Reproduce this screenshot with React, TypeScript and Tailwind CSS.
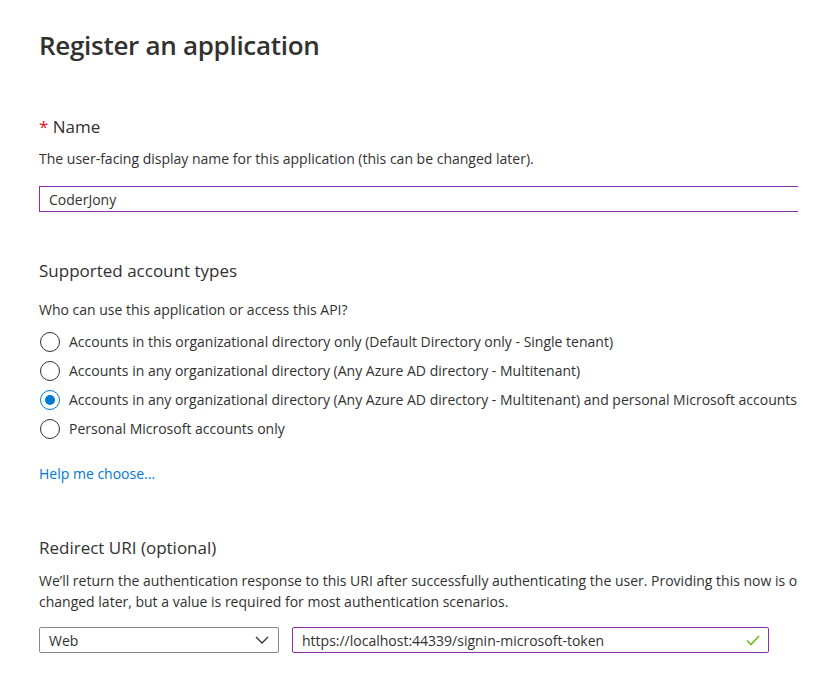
import React from "react";

const font = { fontFamily: '"Open Sans", "Noto Sans", sans-serif' };

function Radio({ checked, label }: { checked?: boolean; label: string }) {
  return (
    <div className="flex h-[29px] items-center">
      <div
        className={
          checked
            ? "ml-[1px] flex h-[20px] w-[20px] shrink-0 items-center justify-center rounded-full border border-[#0078d4]"
            : "ml-[1px] h-[20px] w-[20px] shrink-0 rounded-full border border-[#323130]"
        }
      >
        {checked && <div className="h-[10px] w-[10px] rounded-full bg-[#0078d4]" />}
      </div>
      <span className="ml-[9px] whitespace-nowrap text-[14px] text-[#323130]">{label}</span>
    </div>
  );
}

export default function App() {
  return (
    <div className="h-[698px] w-[831px] overflow-hidden bg-white" style={font}>
      <div className="w-[798px] overflow-hidden pl-[39px] text-[#323130]">
        <h1 className="pt-[25px] text-[26px] font-semibold leading-[40px] tracking-[-0.3px]">Register an application</h1>

        <div className="mt-[50px] text-[17px] leading-[24px]">
          <span className="text-[#e81123]">*</span> Name
        </div>
        <div className="mt-[10px] whitespace-nowrap text-[14px] leading-[20px]">
          The user-facing display name for this application (this can be changed later).
        </div>
        <div className="mt-[17px] flex h-[26px] w-[770px] items-center border border-[#8f2ea9] pl-[9px] text-[14px]">
          CoderJony
        </div>

        <div className="mt-[47px] text-[17px] leading-[24px]">Supported account types</div>
        <div className="mt-[17px] text-[14px] leading-[20px]">Who can use this application or access this API?</div>
        <div className="mt-[7px]">
          <Radio label="Accounts in this organizational directory only (Default Directory only - Single tenant)" />
          <Radio label="Accounts in any organizational directory (Any Azure AD directory - Multitenant)" />
          <Radio checked label="Accounts in any organizational directory (Any Azure AD directory - Multitenant) and personal Microsoft accounts" />
          <Radio label="Personal Microsoft accounts only" />
        </div>

        <div className="mt-[21px] text-[14px] leading-[20px] text-[#0078d4]">Help me choose...</div>

        <div className="mt-[52px] text-[17px] leading-[24px]">Redirect URI (optional)</div>
        <div className="mt-[10px] w-[800px] text-[14px] leading-[21px]">
          <div className="whitespace-nowrap">
            We’ll return the authentication response to this URI after successfully authenticating the user. Providing this now is optional and it can be
          </div>
          <div className="whitespace-nowrap">changed later, but a value is required for most authentication scenarios.</div>
        </div>

        <div className="mt-[15px] flex gap-[13px]">
          <div className="flex h-[26px] w-[240px] items-center justify-between rounded-[2px] border border-[#8a8886] pl-[9px] pr-[9px] text-[14px]">
            <span>Web</span>
            <svg width="14" height="8" viewBox="0 0 14 8" fill="none">
              <path d="M1 1L7 7L13 1" stroke="#323130" strokeWidth="1.3" />
            </svg>
          </div>
          <div className="flex h-[26px] w-[477px] items-center justify-between rounded-[2px] border border-[#8f2ea9] pl-[9px] pr-[8px] text-[14px]">
            <span>https://localhost:44339/signin-microsoft-token</span>
            <svg width="14" height="11" viewBox="0 0 14 11" fill="none">
              <path d="M1 5.5L5 9.5L13 1" stroke="#5db300" strokeWidth="1.3" />
            </svg>
          </div>
        </div>
      </div>
    </div>
  );
}
